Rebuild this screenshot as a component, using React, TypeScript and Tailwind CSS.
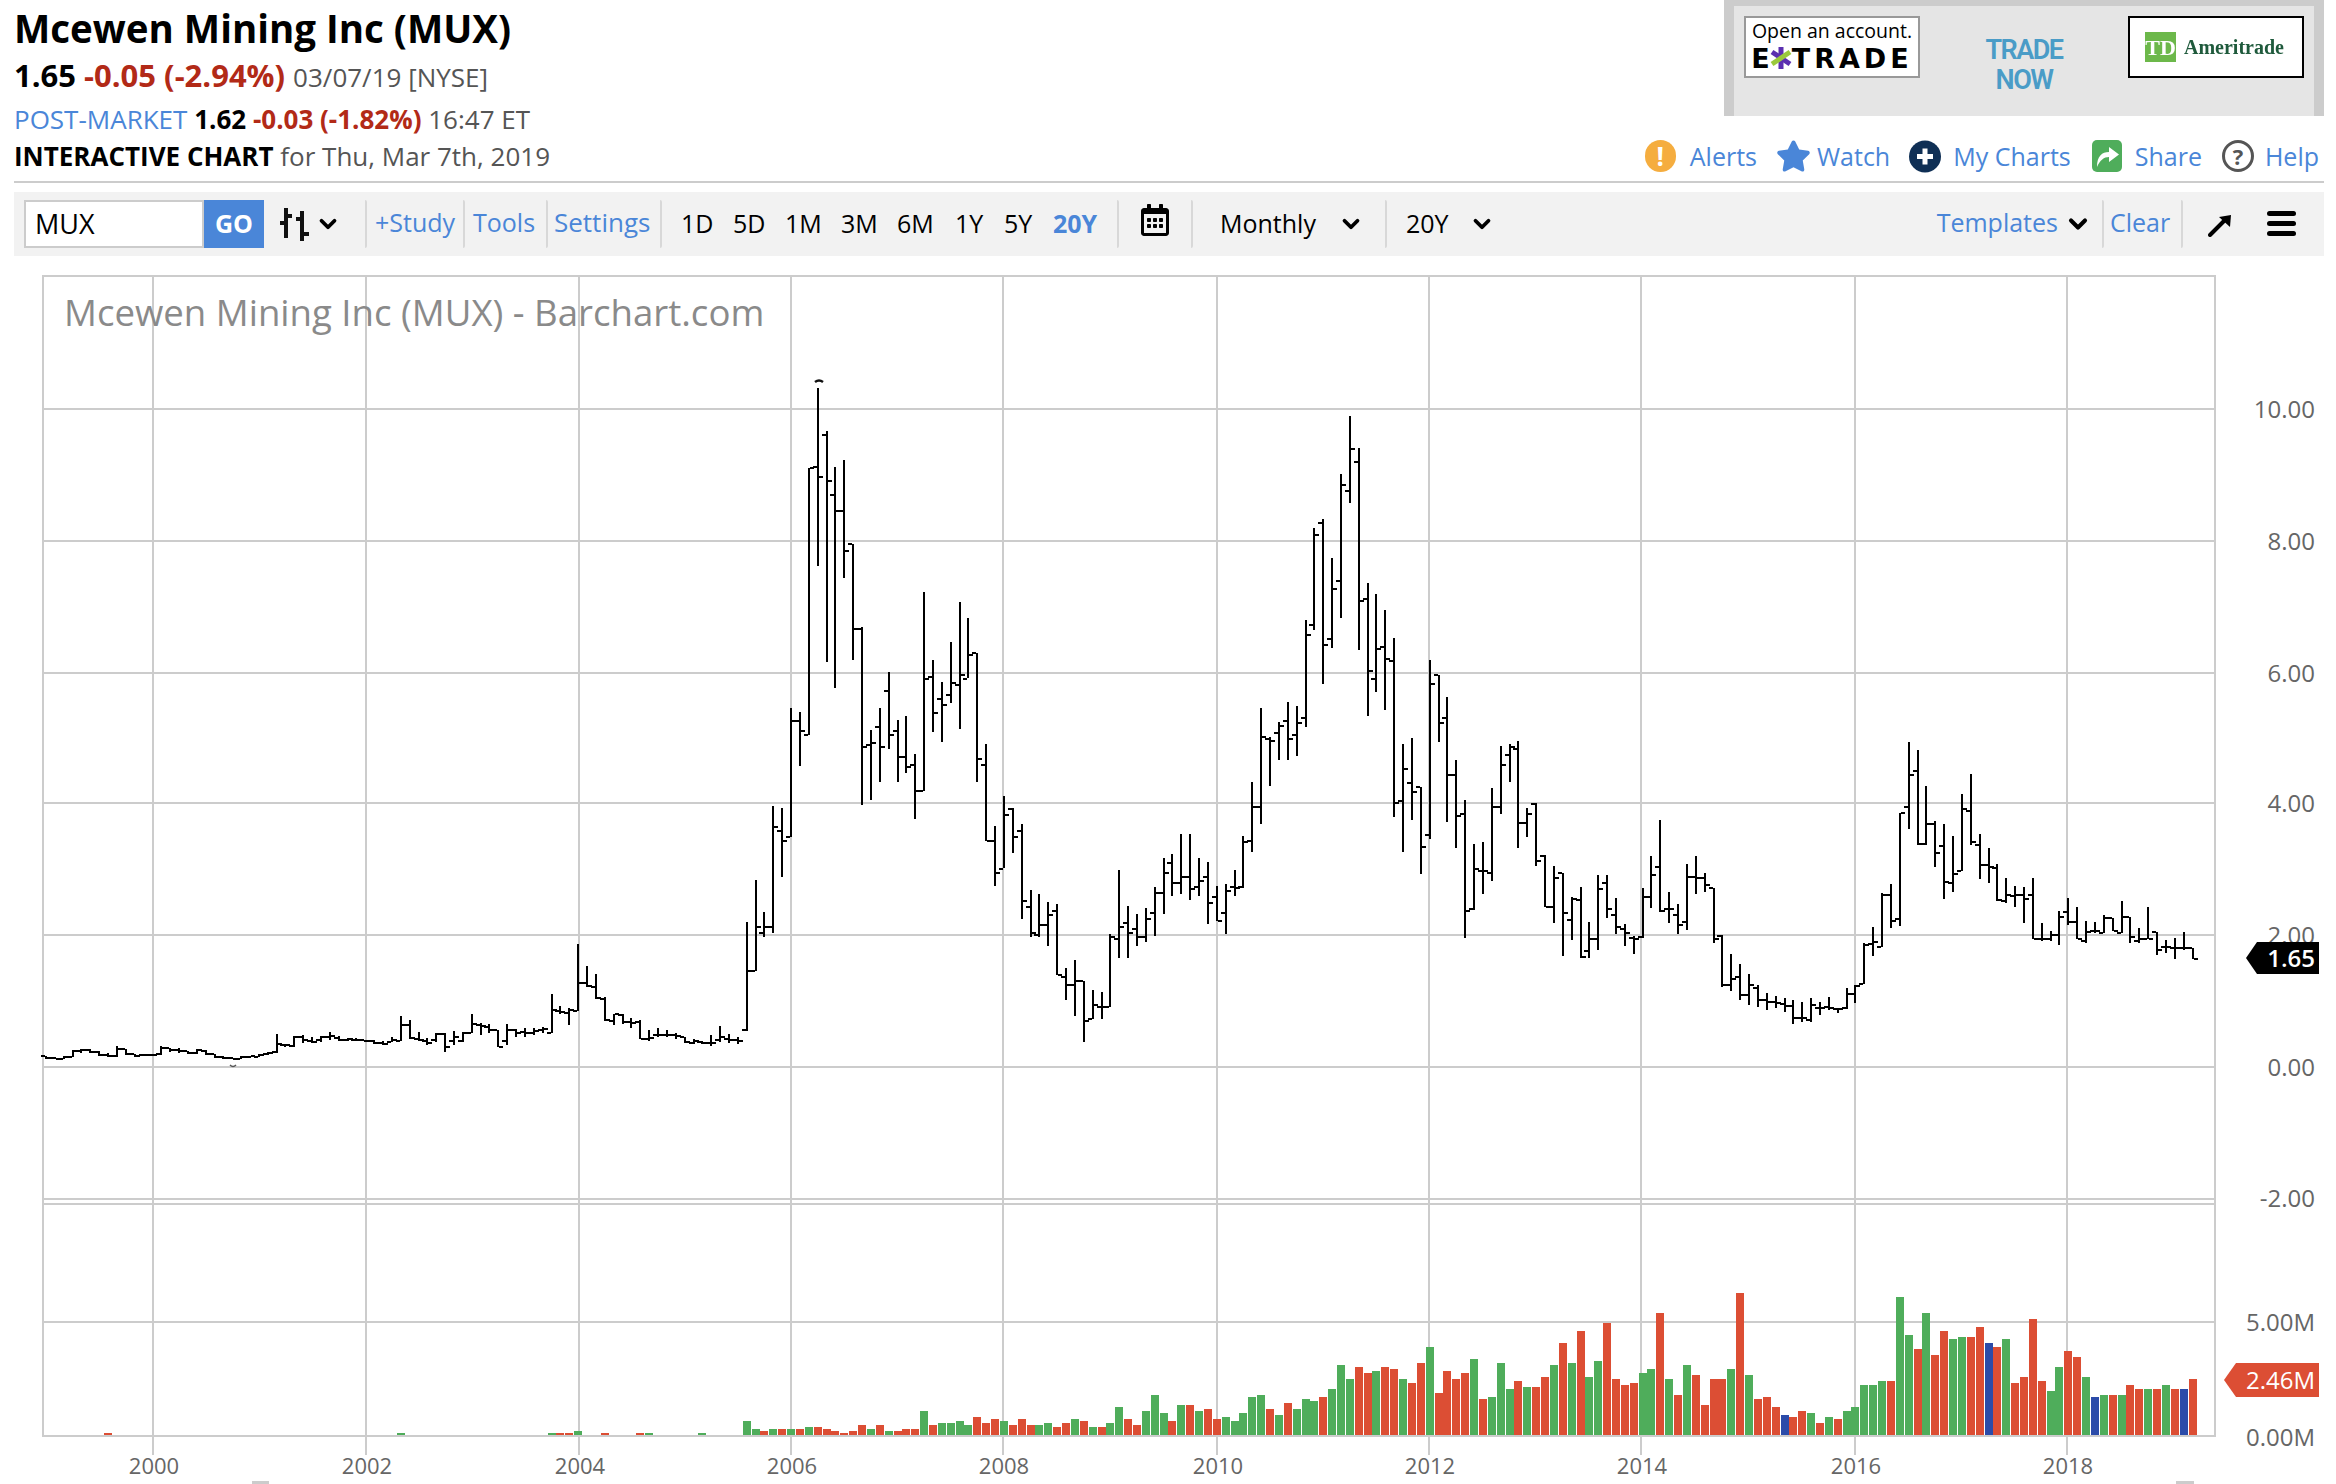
import { ChevronDown } from "lucide-react";
import { FaRegCalendarAlt, FaStar } from "react-icons/fa";

// monthly bars from Jan 1999, as page y of [high, low, open, close]
const BARS: number[][] = [
  [1056,1059,1056,1058],[1057,1059,1058,1059],[1056,1059,1059,1057],[1050,1057,1057,1051],[1049,1053,1051,1050],
  [1049,1053,1050,1052],[1051,1056,1052,1055],[1053,1057,1055,1056],[1046,1057,1056,1049],[1049,1055,1049,1054],
  [1054,1057,1054,1056],[1054,1056,1055,1055],[1054,1056,1055,1055],[1046,1055,1054,1048],[1048,1052,1048,1050],
  [1048,1053,1050,1051],[1051,1054,1051,1053],[1049,1054,1053,1050],[1050,1055,1051,1054],[1054,1058,1054,1057],
  [1056,1059,1057,1058],[1057,1059,1058,1059],[1056,1059,1059,1057],[1056,1058,1057,1056],[1054,1057,1057,1055],
  [1052,1055,1054,1053],[1034,1053,1052,1044],[1044,1047,1045,1045],[1036,1047,1046,1037],[1035,1043,1037,1040],
  [1037,1043,1041,1042],[1036,1042,1040,1037],[1032,1040,1037,1036],[1036,1041,1038,1040],[1038,1041,1040,1039],
  [1038,1041,1040,1040],[1040,1042,1040,1041],[1040,1044,1041,1043],[1041,1045,1043,1044],[1037,1042,1042,1040],
  [1016,1041,1041,1025],[1020,1039,1025,1038],[1032,1041,1039,1040],[1038,1045,1041,1043],[1033,1042,1040,1034],
  [1033,1052,1034,1047],[1031,1045,1041,1037],[1032,1042,1041,1033],[1014,1033,1033,1024],[1023,1035,1025,1026],
  [1024,1033,1027,1030],[1030,1047,1030,1047],[1024,1045,1041,1030],[1029,1037,1030,1033],[1028,1037,1032,1033],
  [1028,1035,1033,1031],[1027,1033,1030,1029],[994,1033,1033,1010],[1006,1014,1011,1012],[1008,1025,1013,1010],
  [944,1011,1011,983],[966,987,983,986],[974,999,987,998],[997,1021,999,1020],[1014,1025,1021,1014],
  [1014,1024,1015,1022],[1018,1028,1022,1023],[1020,1039,1022,1039],[1030,1041,1039,1038],[1028,1037,1035,1035],
  [1030,1037,1035,1035],[1033,1039,1035,1036],[1037,1043,1037,1042],[1039,1044,1043,1041],[1041,1044,1042,1043],
  [1035,1046,1043,1043],[1026,1042,1040,1037],[1034,1043,1039,1040],[1037,1044,1040,1041],[922,1031,1030,971],
  [880,971,971,927],[912,937,933,927],[806,933,927,827],[808,877,831,841],[708,837,837,721],
  [712,766,721,731],[468,735,735,468],[388,566,467,477],[431,662,435,481],[467,688,495,511],
  [460,578,511,551],[544,660,544,629],[627,805,629,747],[730,800,745,743],[708,782,727,747],
  [672,749,691,735],[720,782,731,757],[716,773,757,767],[754,819,765,791],[592,791,791,679],
  [660,732,677,713],[682,742,699,705],[642,703,695,683],[602,729,685,675],[618,678,679,655],
  [653,782,653,759],[744,841,765,841],[826,886,841,873],[796,868,869,815],[808,853,809,837],
  [824,919,831,901],[890,937,907,933],[894,937,935,925],[902,946,925,915],[904,975,911,975],
  [968,1000,977,985],[960,1016,985,981],[981,1042,981,1021],[990,1019,1019,1005],[992,1019,1007,1007],
  [934,1007,1007,937],[870,958,939,927],[906,958,923,933],[914,946,929,937],[908,942,937,919],
  [887,936,913,893],[858,914,893,873],[854,896,863,883],[834,894,883,877],[834,900,877,889],
  [858,896,887,881],[862,924,877,903],[886,921,897,921],[884,934,913,891],[870,896,887,888],
  [836,888,887,842],[782,852,841,807],[708,824,807,737],[737,786,739,741],[722,760,733,726],
  [702,760,721,739],[706,756,735,723],[620,727,718,635],[528,630,625,535],[519,684,523,645],
  [558,648,639,589],[474,618,581,485],[416,503,491,449],[448,650,462,601],[583,716,599,671],
  [594,692,679,649],[610,710,647,659],[638,817,661,803],[744,852,801,769],[738,820,783,792],
  [787,874,787,847],[660,839,835,684],[675,742,675,723],[697,822,718,775],[760,848,775,816],
  [800,938,814,911],[844,910,909,869],[842,894,871,871],[788,881,873,807],[746,814,807,765],
  [744,782,755,747],[741,848,749,823],[808,837,823,814],[803,866,804,861],[855,907,856,907],
  [866,923,907,878],[873,956,873,913],[897,940,920,899],[887,958,900,957],[922,958,951,939],
  [875,950,939,889],[875,918,883,909],[898,934,915,927],[924,946,929,933],[936,954,938,939],
  [888,938,937,897],[856,908,897,875],[820,912,867,911],[892,923,909,909],[904,934,915,925],
  [864,930,922,877],[856,894,877,878],[873,892,878,885],[888,943,888,939],[935,987,936,985],
  [954,991,985,979],[964,1000,977,995],[974,1005,995,985],[985,1007,988,1000],[993,1010,1000,1002],
  [996,1008,1002,1003],[998,1012,1004,1006],[1000,1024,1006,1018],[1002,1022,1018,1018],[998,1022,1020,1005],
  [1002,1015,1008,1008],[997,1010,1007,1008],[1008,1013,1009,1009],[988,1009,1008,994],[985,1003,994,986],
  [943,984,984,945],[927,956,944,942],[893,947,947,895],[884,928,895,921],[813,926,919,813],
  [742,829,807,775],[750,845,771,844],[786,845,844,824],[821,867,824,853],[824,899,846,882],
  [836,892,883,874],[794,871,871,809],[774,845,811,842],[834,879,845,865],[848,883,865,867],
  [864,901,868,900],[878,903,901,895],[886,907,896,895],[887,923,895,899],[878,939,895,939],
  [923,941,939,939],[931,941,939,935],[911,945,935,917],[898,925,912,922],[907,939,922,939],
  [921,943,941,932],[922,933,931,931],[915,933,933,918],[918,931,918,931],[901,933,933,917],
  [917,943,917,937],[928,943,941,939],[907,939,939,939],[932,955,932,950],[940,953,947,947],
  [938,959,948,948],[932,950,948,948],[948,959,948,959],
];

// volume in px above the base line, one token per month starting Aug 2005
const VOLUME =
  "g14 g6 r4 g6 r6 g6 r6 g8 r8 r6 r4 r2 r4 r10 g6 r10 g4 r4 r6 r6 g24 r10 g12 g12 g14 g10 r18 r12 r16 " +
  "g14 r10 r16 r10 g10 g12 r8 r12 g16 r14 g8 r8 g12 g28 r16 r10 g24 g40 g22 r14 g30 r30 g24 r26 r16 g18 " +
  "g14 g22 g38 g40 r26 g20 r32 g26 g36 g34 r38 g46 g70 g56 r68 r62 g64 r68 r66 g56 r52 r72 g88 r42 r64 " +
  "r56 r62 g76 r36 g38 g72 g46 r54 g48 r48 r58 g70 r92 g72 r104 g58 g74 r112 r56 r50 r52 g62 g66 r122 " +
  "g56 r40 g70 r60 r30 r56 r56 g66 r142 g60 r36 r38 r28 b20 r18 r24 g22 r12 g18 r16 g24 g28 g50 g50 g54 " +
  "r54 g138 g100 r86 g122 r80 r104 g96 g98 r98 r108 b92 r88 g96 r52 r58 r116 r54 g44 g68 r84 r78 g58 b38 " +
  "g40 r40 g40 r50 r46 g46 r46 g50 r46 b46 r56";
const EARLY_VOLUME: [number, string][] = [
  [7, "r2"], [40, "g2"], [57, "g2"], [58, "r2"], [59, "r2"], [60, "g4"], [63, "r2"], [67, "r2"], [68, "g2"], [74, "g2"],
];
const VOLUME_COLORS: Record<string, string> = { g: "#4fad5b", r: "#dc4e34", b: "#2b4ba9" };

const volumeBars: [number, string][] = [
  ...EARLY_VOLUME,
  ...VOLUME.split(" ").map((token, i): [number, string] => [i + 79, token]),
];

const barX = (i: number) => Math.round(46 + 8.87 * i);

const YEARS = [
  [153, "2000"], [366, "2002"], [579, "2004"], [791, "2006"], [1003, "2008"],
  [1217, "2010"], [1429, "2012"], [1641, "2014"], [1855, "2016"], [2067, "2018"],
] as const;
const PRICE_LINES = [
  [409, "10.00"], [541, "8.00"], [673, "6.00"], [803, "4.00"], [935, "2.00"], [1067, "0.00"],
] as const;

const PERIODS = [
  ["1D", "w-[52px]"], ["5D", "w-[52px]"], ["1M", "w-[56px]"], ["3M", "w-[56px]"],
  ["6M", "w-[58px]"], ["1Y", "w-[49px]"], ["5Y", "w-[49px]"],
] as const;

function Sep() {
  return <div className="w-[2px] h-12 bg-[#d8d8d8] rounded-r" />;
}

function Chart() {
  return (
    <svg width={2336} height={1209} viewBox="0 275 2336 1209" className="block">
      {/* grid */}
      {YEARS.map(([x]) => (
        <rect key={x} x={x - 1} y={275} width={2} height={1180} fill="#cccccc" />
      ))}
      {PRICE_LINES.map(([y]) => (
        <rect key={y} x={43} y={y - 1} width={2172} height={2} fill="#cccccc" />
      ))}
      <rect x={43} y={275} width={2172} height={2} fill="#cccccc" />
      <rect x={43} y={1198} width={2172} height={2} fill="#cccccc" />
      <rect x={43} y={1203} width={2172} height={2} fill="#cccccc" />
      <rect x={43} y={1321} width={2172} height={2} fill="#cccccc" />
      <rect x={43} y={1435} width={2172} height={2} fill="#cccccc" />
      <rect x={42} y={275} width={2} height={1162} fill="#cccccc" />
      <rect x={2214} y={275} width={2} height={1162} fill="#cccccc" />

      <text x={64} y={326} fontSize={36.6} fill="#8a8a8a">
        Mcewen Mining Inc (MUX) - Barchart.com
      </text>

      {/* price bars */}
      <g shapeRendering="crispEdges" fill="#000000">
        {BARS.map(([high, low, open, close], i) => {
          const x = barX(i);
          return (
            <g key={i}>
              <rect x={x - 1} y={high} width={2} height={low - high} />
              <rect x={x - 5} y={open - 1} width={4} height={2} />
              <rect x={x + 1} y={close - 1} width={4} height={2} />
            </g>
          );
        })}
      </g>
      <path d="M815 382 q4 -3 8 0" stroke="#111111" strokeWidth={2.5} fill="none" />
      <path d="M230 1065 q3 3 6 0" stroke="#555555" strokeWidth={1.5} fill="none" />

      {/* volume */}
      <g shapeRendering="crispEdges">
        {volumeBars.map(([i, token]) => {
          const h = Number(token.slice(1));
          return (
            <rect key={i} x={barX(i) - 4} y={1435 - h} width={8} height={h} fill={VOLUME_COLORS[token[0]]} />
          );
        })}
      </g>

      {/* axis labels */}
      <g fontSize={24} fill="#666666" textAnchor="end">
        {PRICE_LINES.map(([y, label]) => (
          <text key={y} x={2315} y={y + 9}>
            {label}
          </text>
        ))}
        <text x={2315} y={1207}>-2.00</text>
        <text x={2315} y={1331}>5.00M</text>
        <text x={2315} y={1446}>0.00M</text>
      </g>
      <g fontSize={22} fill="#666666" textAnchor="middle">
        {YEARS.map(([x, label]) => (
          <text key={x} x={x + 1} y={1474}>
            {label}
          </text>
        ))}
      </g>

      {/* last price and volume tags */}
      <polygon points="2246,958 2257,942 2319,942 2319,974 2257,974" fill="#000000" />
      <text x={2315} y={967} fontSize={24} fontWeight={600} fill="#ffffff" textAnchor="end">1.65</text>
      <polygon points="2224,1380 2236,1363 2319,1363 2319,1397 2236,1397" fill="#dc4e34" />
      <text x={2315} y={1389} fontSize={24} fill="#ffffff" textAnchor="end">2.46M</text>

      {/* scroller handles */}
      <rect x={252} y={1481} width={17} height={3} fill="#cccccc" />
      <rect x={2176} y={1481} width={18} height={3} fill="#cccccc" />
    </svg>
  );
}

function AdBanner() {
  return (
    <div className="w-[600px] h-[116px] bg-[#e5e5e5] border-x-[10px] border-t-[6px] border-[#cccccc] flex items-start pl-[10px] pr-[10px] pt-[10px]">
      <div className="w-[176px] h-[62px] bg-white border-2 border-[#999999] flex flex-col items-center leading-none text-black">
        <div className="text-[19.5px] leading-[24px] mt-[1px] whitespace-nowrap">Open an account.</div>
        <div className="flex items-center h-[30px] font-['DejaVu_Sans',sans-serif] font-bold text-[27px] leading-none">
          <span>E</span>
          <svg width="22" height="22" viewBox="0 0 22 22">
            <path d="M11 0 V22" stroke="#5b2fb0" strokeWidth="5" />
            <path d="M2 5 L20 17" stroke="#5b2fb0" strokeWidth="5" />
            <path d="M20 5 L2 17" stroke="#9ac93c" strokeWidth="5" />
          </svg>
          <span className="tracking-[4px]">TRADE</span>
        </div>
      </div>
      <div className="flex-1 flex flex-col items-center text-[#4a9cc7] font-semibold text-[27px] leading-[30px] tracking-[-1.5px] pt-[19px] font-['Roboto',sans-serif]">
        <div>TRADE</div>
        <div>NOW</div>
      </div>
      <div className="w-[176px] h-[62px] bg-white border-2 border-black flex items-center pl-[15px] gap-[8px]">
        <div className="w-[31px] h-[30px] bg-[#6cb84a] text-white font-['Liberation_Serif',serif] font-bold text-[22px] flex items-center justify-center blur-[0.5px]">
          TD
        </div>
        <div className="font-['Liberation_Serif',serif] font-bold text-[20px] text-[#1f5a3c] blur-[0.5px]">Ameritrade</div>
      </div>
    </div>
  );
}

function LinksRow() {
  return (
    <div className="flex items-center h-[34px] mt-[23px] text-[#4a86d8] text-[25px] leading-none mr-[5px]">
      <div className="w-[31px] h-[32px] rounded-full bg-[#f5ad3f] text-white font-bold text-[26px] flex items-center justify-center">!</div>
      <span className="ml-[14px]">Alerts</span>
      <FaStar className="ml-[19px] w-[35px] h-[34px]" />
      <span className="ml-[6px]">Watch</span>
      <svg width="32" height="33" viewBox="0 0 32 33" className="ml-[19px]">
        <circle cx="16" cy="16.5" r="16" fill="#0f2f55" />
        <path d="M16 8.5 V24.5 M8 16.5 H24" stroke="#ffffff" strokeWidth="5" />
      </svg>
      <span className="ml-[12px]">My Charts</span>
      <svg width="30" height="32" viewBox="0 0 30 32" className="ml-[21px]">
        <rect width="30" height="32" rx="5" fill="#4fad5b" />
        <path d="M5 27 C5 16 10 12 17 12 V7 L27 14.5 L17 22 V17 C12 17 8 20 5 27 Z" fill="#ffffff" />
      </svg>
      <span className="ml-[13px]">Share</span>
      <div className="ml-[20px] w-[32px] h-[32px] rounded-full border-[3px] border-[#555555] text-[#555555] font-bold text-[22px] flex items-center justify-center">?</div>
      <span className="ml-[11px]">Help</span>
    </div>
  );
}

function Toolbar() {
  return (
    <div className="mt-[9px] ml-[14px] mr-[12px] h-[64px] bg-[#f2f2f2] flex items-center pl-[10px] pr-[28px] text-[25px] text-black">
      <div className="w-[180px] h-[48px] bg-white border-2 border-[#cccccc] flex items-center pl-[9px] text-[27px]">MUX</div>
      <div className="w-[60px] h-[48px] bg-[#4a86d8] text-white font-bold flex items-center justify-center">GO</div>
      <svg width="32" height="36" viewBox="0 0 32 36" className="ml-[16px]">
        <path d="M6 2 V32 M22 5 V35 M0 17 H6 M6 10 H12 M16 13 H22 M22 28 H29" stroke="#111111" strokeWidth="4" fill="none" />
      </svg>
      <ChevronDown className="ml-[3px] w-[26px] h-[26px]" strokeWidth={3.5} />
      <div className="ml-[24px]"><Sep /></div>
      <span className="ml-[8px] w-[88px] text-[#4a86d8] -mt-[2px]">+Study</span>
      <Sep />
      <span className="ml-[8px] w-[73px] text-[#4a86d8] -mt-[2px]">Tools</span>
      <Sep />
      <span className="ml-[6px] w-[106px] text-[#4a86d8] text-[26px] -mt-[3px]">Settings</span>
      <Sep />
      <div className="ml-[19px] flex items-center">
        {PERIODS.map(([label, width]) => (
          <span key={label} className={width}>{label}</span>
        ))}
        <span className="w-[64px] text-[#4a86d8] font-bold">20Y</span>
      </div>
      <Sep />
      <FaRegCalendarAlt className="ml-[21px] w-[30px] h-[32px] -mt-[8px]" />
      <div className="ml-[21px]"><Sep /></div>
      <span className="ml-[27px] w-[118px]">Monthly</span>
      <ChevronDown className="w-[26px] h-[26px]" strokeWidth={3.5} />
      <div className="ml-[21px]"><Sep /></div>
      <span className="ml-[19px] w-[63px]">20Y</span>
      <ChevronDown className="w-[26px] h-[26px]" strokeWidth={3.5} />
      <div className="flex-1" />
      <span className="text-[#4a86d8] -mt-[2px]">Templates</span>
      <ChevronDown className="ml-[6px] w-[28px] h-[28px]" strokeWidth={3.5} />
      <div className="ml-[10px]"><Sep /></div>
      <span className="ml-[6px] w-[71px] text-[#4a86d8] -mt-[2px]">Clear</span>
      <Sep />
      <svg width="24" height="22" viewBox="0 0 24 22" className="ml-[25px] mt-[3px]">
        <path d="M2 20 L16 6" stroke="#000000" strokeWidth="4" strokeLinecap="round" />
        <polygon points="23,0 22,12 11,2" fill="#000000" />
      </svg>
      <div className="ml-[35px] flex flex-col gap-[5px] -mt-[1px]">
        <div className="w-[29px] h-[5px] rounded-sm bg-black" />
        <div className="w-[29px] h-[5px] rounded-sm bg-black" />
        <div className="w-[29px] h-[5px] rounded-sm bg-black" />
      </div>
    </div>
  );
}

export default function App() {
  return (
    <div className="w-[2336px] h-[1484px] bg-white overflow-hidden font-['Open_Sans','Noto_Sans',sans-serif]">
      <div className="h-[181px] ml-[14px] mr-[12px] flex justify-between">
        <div className="flex flex-col text-[#555555]">
          <h1 className="text-[38.5px] leading-[56px] font-bold text-black">Mcewen Mining Inc (MUX)</h1>
          <div className="text-[26px] leading-[38px]">
            <span className="text-[31px] font-bold text-black">1.65 </span>
            <span className="text-[31px] font-bold text-[#b22a17]">-0.05 (-2.94%) </span>
            03/07/19 [NYSE]
          </div>
          <div className="text-[26px] leading-[46px]">
            <span className="text-[#4a86d8]">POST-MARKET </span>
            <span className="font-bold text-black">1.62 </span>
            <span className="font-bold text-[#b22a17]">-0.03 (-1.82%) </span>
            16:47 ET
          </div>
          <div className="text-[26px] leading-[28px]">
            <span className="font-bold text-black">INTERACTIVE CHART </span>
            for Thu, Mar 7th, 2019
          </div>
        </div>
        <div className="flex flex-col items-end">
          <AdBanner />
          <LinksRow />
        </div>
      </div>
      <div className="h-[2px] ml-[14px] mr-[12px] bg-[#cccccc]" />
      <Toolbar />
      <div className="mt-[19px]">
        <Chart />
      </div>
    </div>
  );
}
